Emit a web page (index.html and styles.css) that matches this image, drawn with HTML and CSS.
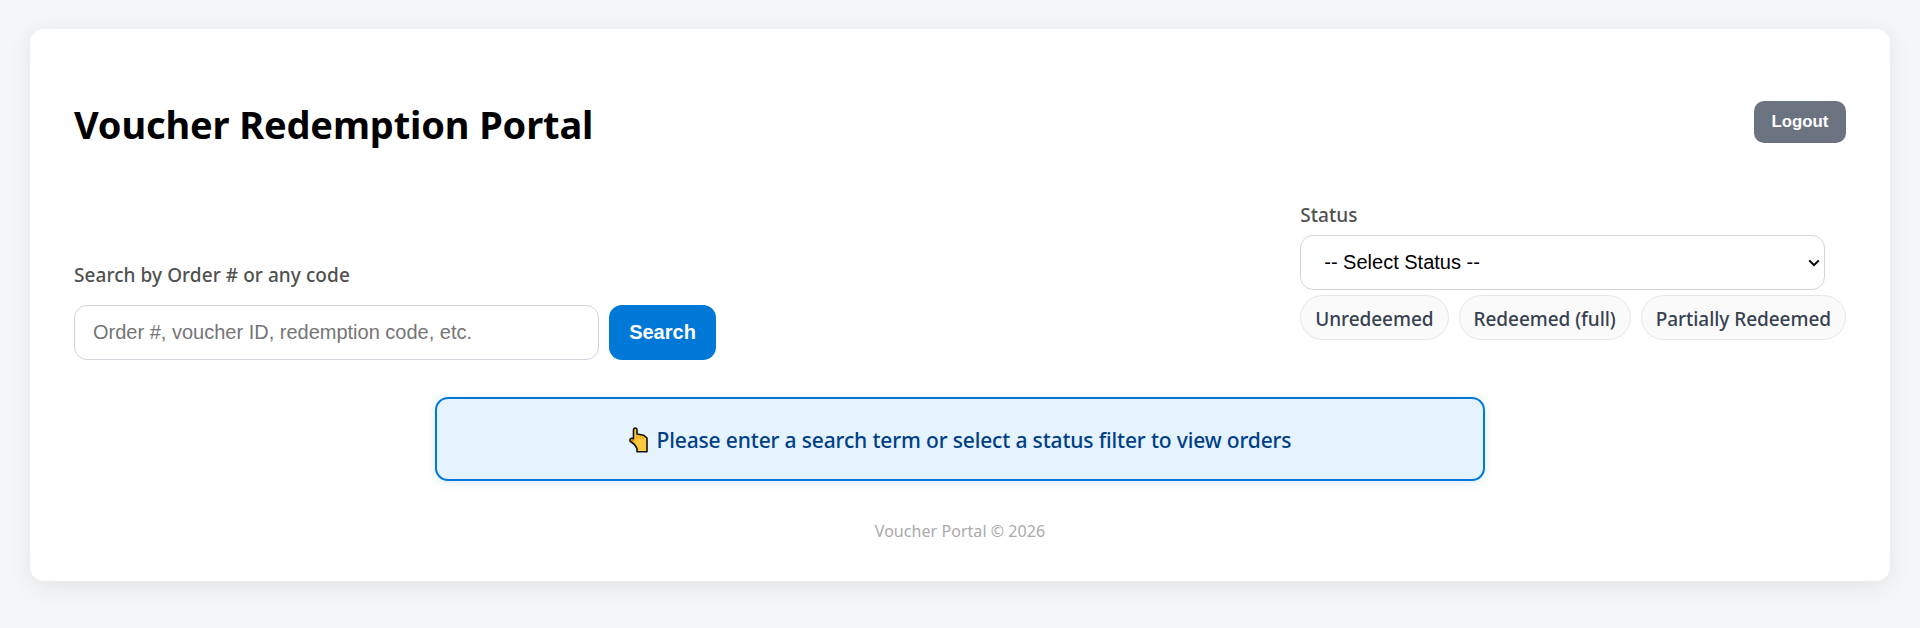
FILE: index.html
```html
<!DOCTYPE html>
<html lang="en">
<head>
    <meta charset="UTF-8">
    <meta name="viewport" content="width=device-width, initial-scale=1.0">
    <title>Voucher Redemption Portal</title>
    <link rel="stylesheet" href="styles.css">
</head>
<body>

    <div class="container">
        <header class="header">
            <h1>Voucher Redemption Portal</h1>
            <button class="logout-btn">Logout</button>
        </header>

        <div class="controls">
            <form class="search-form" onsubmit="return false">
                <label for="search">Search by Order # or any code</label>
                <div class="search-row">
                    <input type="text" id="search" placeholder="Order #, voucher ID, redemption code, etc.">
                    <button class="search-btn" type="submit">Search</button>
                </div>
            </form>

            <div class="status-filter">
                <label for="status">Status</label>
                <div class="select-wrap">
                    <select id="status">
                        <option value="">-- Select Status --</option>
                        <option value="unredeemed">Unredeemed</option>
                        <option value="redeemed">Redeemed (full)</option>
                        <option value="partial">Partially Redeemed</option>
                    </select>
                    <svg class="arrow" width="12" height="8" viewBox="0 0 12 8">
                        <path d="M1.2 1.4L6 6.2L10.8 1.4" fill="none" stroke="#000" stroke-width="2"/>
                    </svg>
                </div>
                <div class="chips">
                    <span class="chip">Unredeemed</span>
                    <span class="chip">Redeemed (full)</span>
                    <span class="chip">Partially Redeemed</span>
                </div>
            </div>
        </div>

        <div class="notice">
            <svg class="hand" width="19" height="26" viewBox="0 0 19 26">
                <path d="M4.5 3.5Q4.5 1 6.3 1T8 3.5V7L14.5 8.2L18 11V24.8H8V21.5L5.5 17.5L1 14Q.6 11.5 2.8 11.2L4.5 12Z" fill="#ffc83d" stroke="#111" stroke-width="1.6" stroke-linejoin="round"/>
                <path d="M1.8 12.2L4.6 12.2V15.6L1.8 13.6Z" fill="#d67d00"/>
                <path d="M8 8.5V12M11 9V12M14 9.5V12" fill="none" stroke="#d67d00" stroke-width="0.8"/>
            </svg>
            <span>Please enter a search term or select a status filter to view orders</span>
        </div>

        <footer>Voucher Portal © 2026</footer>
    </div>

</body>
</html>
```
FILE: styles.css
```css
* {
    box-sizing: border-box;
}
body {
    background-color: #f4f6f8;
    font-family: "Segoe UI", "Noto Sans", sans-serif;
    margin: 0;
    padding: 29px 30px 47px;
}
.container {
    background-color: #fff;
    padding: 69px 44px 39px;
    border-radius: 14px;
    box-shadow: 0 5px 25px rgba(0, 0, 0, 0.08);
}
.header {
    display: flex;
    justify-content: space-between;
    align-items: flex-start;
    margin-bottom: 51px;
}
h1 {
    margin: 0;
    font-size: 38px;
    line-height: 53px;
    letter-spacing: -0.14px;
    color: #000;
}
button {
    border: none;
    color: #fff;
    font-family: Arial, "Liberation Sans", sans-serif;
    font-weight: bold;
    cursor: pointer;
}
.logout-btn {
    width: 92px;
    height: 42px;
    margin-top: 3px;
    padding: 0;
    background-color: #6b7280;
    font-size: 16.8px;
    border-radius: 10px;
}
.controls {
    display: flex;
    justify-content: space-between;
    align-items: flex-end;
    height: 158px;
}
label {
    display: block;
    font-size: 19px;
    font-weight: 500;
    line-height: 26px;
    letter-spacing: 0.07px;
    color: #505050;
}
.search-row {
    display: flex;
    gap: 10px;
    margin-top: 17px;
}
input,
select {
    width: 525px;
    height: 55px;
    border: 1px solid #d1d5db;
    border-radius: 13px;
    background-color: #fff;
    color: #000;
    font-family: Arial, "Liberation Sans", sans-serif;
    font-size: 20px;
}
input {
    padding: 0 18px;
}
input::placeholder {
    color: #757575;
}
.search-btn {
    width: 107px;
    height: 55px;
    padding: 0;
    background-color: #0078d7;
    font-size: 20px;
    border-radius: 13px;
}
.status-filter {
    align-self: flex-start;
}
.select-wrap {
    position: relative;
    width: 525px;
    margin-top: 7px;
}
select {
    display: block;
    padding: 0 0 2px 23px;
    appearance: none;
}
/* arrow over the select */
.arrow {
    position: absolute;
    top: 24px;
    right: 5px;
    pointer-events: none;
}
.chips {
    display: flex;
    gap: 10px;
    margin-top: 5px;
}
.chip {
    height: 45px;
    padding: 0 14px;
    border: 1px solid #e5e7eb;
    border-radius: 23px;
    background-color: #fafafa;
    color: #374151;
    font-size: 19px;
    font-weight: 500;
    line-height: 46px;
    letter-spacing: -0.05px;
    white-space: nowrap;
}
.notice {
    display: flex;
    justify-content: center;
    align-items: center;
    gap: 9px;
    width: 1050px;
    height: 84px;
    padding-top: 2px;
    margin: 37px auto 39px;
    border: 2px solid #0078d7;
    border-radius: 13px;
    background-color: #e5f2ff;
    box-shadow: 0 2px 10px rgba(0, 120, 215, 0.15);
    color: #004085;
    font-size: 21px;
    font-weight: 500;
    letter-spacing: -0.15px;
    white-space: nowrap;
}
footer {
    text-align: center;
    font-size: 16px;
    line-height: 22px;
    letter-spacing: 0.05px;
    color: #aaa;
}
```
